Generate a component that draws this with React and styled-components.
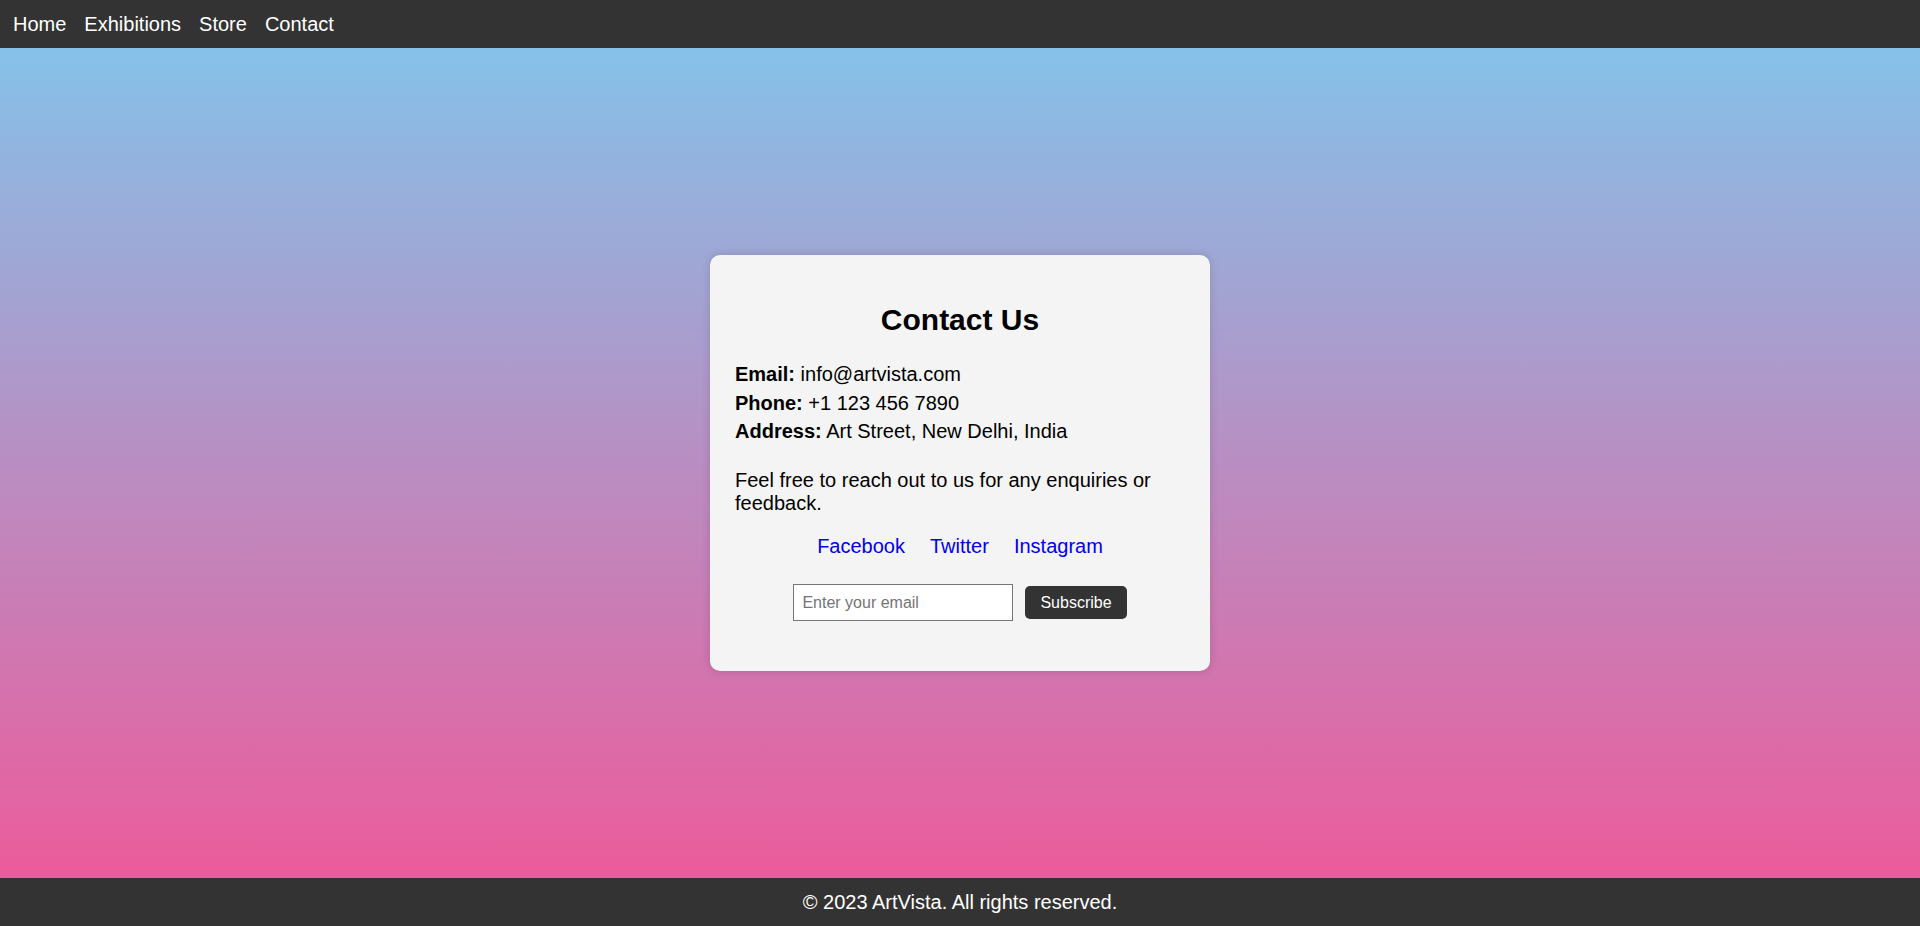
import styled, { createGlobalStyle } from "styled-components";

const GlobalStyle = createGlobalStyle`
    html, body {
        margin: 0;
        padding: 0;
    }
    body {
        font-family: "Liberation Sans", Arial, sans-serif;
        font-size: 20px;
    }
`

const App = () => {
    return (<Page>
        <GlobalStyle />
        <Nav>
            <NavLink href="#">Home</NavLink>
            <NavLink href="#">Exhibitions</NavLink>
            <NavLink href="#">Store</NavLink>
            <NavLink href="#">Contact</NavLink>
        </Nav>
        <Main>
            <Card>
                <Title>Contact Us</Title>
                <Info><strong>Email:</strong> info@artvista.com</Info>
                <Info><strong>Phone:</strong> +1 123 456 7890</Info>
                <Info><strong>Address:</strong> Art Street, New Delhi, India</Info>
                <Description>Feel free to reach out to us for any enquiries or feedback.</Description>
                <Socials>
                    <Social href="#">Facebook</Social>
                    <Social href="#">Twitter</Social>
                    <Social href="#">Instagram</Social>
                </Socials>
                <Form onSubmit={e => e.preventDefault()}>
                    <EmailInput type="email" placeholder="Enter your email" />
                    <Button type="submit">Subscribe</Button>
                </Form>
            </Card>
        </Main>
        <Footer>© 2023 ArtVista. All rights reserved.</Footer>
    </Page>);
}

export default App;

const Page = styled.div`
    height: 100vh;
    display: flex;
    flex-direction: column;
`

const Nav = styled.nav`
    height: 48px;
    flex-shrink: 0;
    background: #333;
    display: flex;
    align-items: center;
    gap: 18px;
    padding: 0 13px;
`

const NavLink = styled.a`
    color: #fff;
    text-decoration: none;
    font-size: 20px;
`

const Main = styled.main`
    flex: 1;
    display: flex;
    justify-content: center;
    align-items: center;
    background: linear-gradient(to bottom, #85c1e9, #ec5b9b);
`

const Card = styled.div`
    width: 500px;
    box-sizing: border-box;
    padding: 25px 25px 50px;
    background: #f4f4f4;
    border-radius: 10px;
    box-shadow: 0 0 10px rgba(0, 0, 0, 0.15);
`

const Title = styled.h2`
    font-size: 30px;
    text-align: center;
    margin: 23px 0 26px;
`

const Info = styled.p`
    margin: 0 0 5.6px;
    line-height: 23px;
`

const Description = styled.p`
    margin: 26px 0 20px;
    line-height: 23px;
`

const Socials = styled.div`
    display: flex;
    justify-content: center;
    gap: 25px;
    line-height: 23px;
`

const Social = styled.a`
    color: #0000ee;
    text-decoration: none;
`

const Form = styled.form`
    display: flex;
    justify-content: center;
    align-items: center;
    gap: 12px;
    margin-top: 26px;
`

const EmailInput = styled.input`
    width: 220px;
    height: 37px;
    box-sizing: border-box;
    padding: 8px;
    font-family: "Liberation Sans", Arial, sans-serif;
    font-size: 16px;
    border: 1px solid #767676;
    background: #fff;
    &::placeholder {
        color: #757575;
    }
`

const Button = styled.button`
    height: 33px;
    padding: 0 15px;
    background: #333;
    color: #fff;
    border: none;
    border-radius: 5px;
    font-family: "Liberation Sans", Arial, sans-serif;
    font-size: 16px;
    cursor: pointer;
`

const Footer = styled.footer`
    height: 48px;
    flex-shrink: 0;
    background: #333;
    color: #fff;
    display: flex;
    justify-content: center;
    align-items: center;
    font-size: 20px;
`
